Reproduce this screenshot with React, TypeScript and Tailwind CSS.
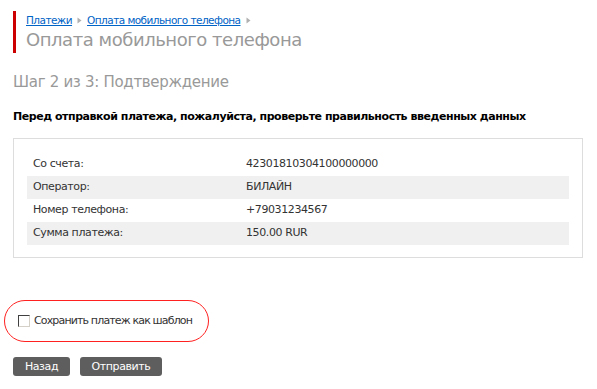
import React from "react";

const rows = [
  { label: "Со счета:", value: "42301810304100000000", shaded: false },
  { label: "Оператор:", value: "БИЛАЙН", shaded: true },
  { label: "Номер телефона:", value: "+79031234567", shaded: false },
  { label: "Сумма платежа:", value: "150.00 RUR", shaded: true },
];

function Arrow() {
  return (
    <svg width="5" height="7" viewBox="0 0 5 7" className="mx-[5px] inline-block">
      <path d="M0.5 0.5 L4.5 3.5 L0.5 6.5 Z" fill="#b0b0b0" />
    </svg>
  );
}

export default function App() {
  return (
    <div
      className="w-[597px] h-[389px] bg-white overflow-hidden text-[11px] text-[#222] tracking-[-0.4px] whitespace-nowrap"
      style={{ fontFamily: '"DejaVu Sans", Verdana, sans-serif' }}
    >
      <div className="pt-[11px] pl-[13px]">
        <div className="border-l-[3px] border-[#cc0000] pl-[10px] h-[42px] flex flex-col">
          <div className="flex items-center h-[17px] pt-[2px] leading-none text-[10.5px] tracking-[-0.55px]">
            <a href="#" className="text-[#0063c6] underline">Платежи</a>
            <Arrow />
            <a href="#" className="text-[#0063c6] underline">Оплата мобильного телефона</a>
            <Arrow />
          </div>
          <div className="text-[18px] leading-[24px] text-[#999999] tracking-[-0.45px]">Оплата мобильного телефона</div>
        </div>
      </div>

      <div className="pl-[13px] mt-[19px] text-[15px] leading-[20px] text-[#999999] tracking-[-0.3px]">
        Шаг 2 из 3: Подтверждение
      </div>

      <div className="pl-[13px] mt-[18px] text-[11px] leading-[14px] font-bold text-black tracking-[-0.45px]">
        Перед отправкой платежа, пожалуйста, проверьте правильность введенных данных
      </div>

      <div className="ml-[13px] mt-[14px] w-[570px] h-[120px] border border-[#dddddd] pt-[14px] px-[13px]">
        {rows.map((r) => (
          <div
            key={r.label}
            className={`flex items-center h-[23px] ${r.shaded ? "bg-[#f0f0f0]" : ""}`}
          >
            <div className="w-[219px] pl-[6px] text-[#333]">{r.label}</div>
            <div className="text-[#333]">{r.value}</div>
          </div>
        ))}
      </div>

      <div className="ml-[4px] mt-[42px] w-[205px] h-[42px] rounded-full border border-[#ff2020] flex items-center pl-[13px]">
        <span className="w-[12px] h-[12px] border border-t-[#404040] border-l-[#404040] border-r-[#d4d0c8] border-b-[#d4d0c8] bg-white mr-[4px]" />
        <span className="text-[#333] text-[11px] tracking-[-0.85px]">Сохранить платеж как шаблон</span>
      </div>

      <div className="ml-[13px] mt-[15px] flex gap-[10px]">
        <button className="w-[57px] h-[19px] rounded-[3px] bg-[#5e5e5e] text-white text-[11px] leading-none">Назад</button>
        <button className="w-[82px] h-[19px] rounded-[3px] bg-[#5e5e5e] text-white text-[11px] leading-none">Отправить</button>
      </div>
    </div>
  );
}
